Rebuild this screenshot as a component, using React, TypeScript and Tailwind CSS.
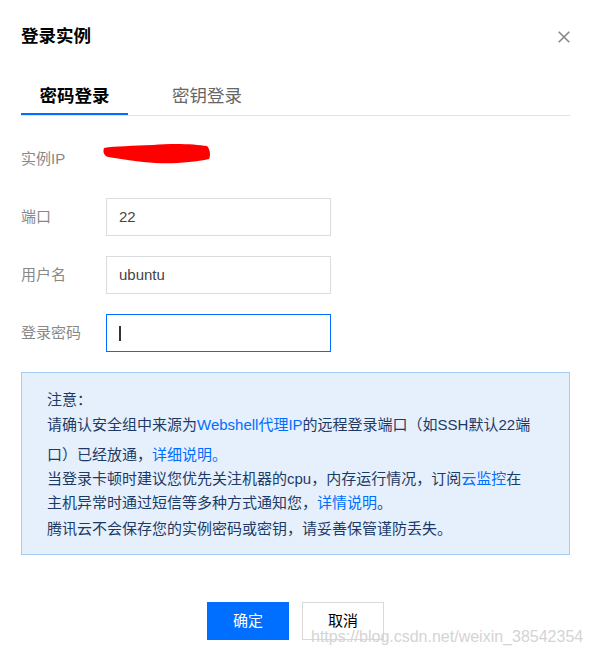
const font = "font-['Liberation_Sans','Noto_Sans_CJK_SC',sans-serif]";

// one form row: grey label on the left, field on the right
function FieldRow({ label, children }: { label: string; children: React.ReactNode }) {
  return (
    <div className="flex items-center mt-[20px]">
      <div className="w-[85px] text-[15px] leading-[24px] text-[#888]">{label}</div>
      {children}
    </div>
  );
}

function Link({ children }: { children: React.ReactNode }) {
  return <span className="text-[#006eff]">{children}</span>;
}

export default function App() {
  return (
    <div className={`relative w-[591px] h-[656px] bg-white px-[20px] pt-[24px] ${font}`}>
      {/* Header */}
      <div className="flex items-center justify-between h-[24px] pl-px">
        <h1 className="text-[17.5px] leading-[24px] font-bold text-black">登录实例</h1>
        <svg width="12" height="12" viewBox="0 0 12 12" className="mr-px mt-px">
          <path d="M0.7 0.7 L11.3 11.3 M11.3 0.7 L0.7 11.3" stroke="#888" strokeWidth="1.6" />
        </svg>
      </div>

      {/* Tabs */}
      <div className="flex mt-[36px] ml-px">
        <div className="w-[107px] h-[31px] text-center text-[17.5px] leading-[24px] font-bold text-black border-b-2 border-[#006eff]">
          密码登录
        </div>
        <div className="ml-[44px] h-[31px] text-[17.5px] leading-[24px] text-[#666]">密钥登录</div>
      </div>
      <div className="h-px bg-[#e2e2e2] ml-px mr-px" />

      {/* Instance IP (redacted) */}
      <div className="flex items-center h-[24px] mt-[31px] pl-px">
        <div className="w-[82px] text-[15px] leading-[24px] text-[#888]">实例IP</div>
        <svg width="108" height="21" viewBox="0 0 108 21" className="self-start mt-[-4px]">
          <path
            d="M1 5 C12 3 30 3 50 2 C70 0 92 1 104 3 C107 6 108 12 106 16 C92 19 72 21 52 20 C36 19 20 16 5 14 C0 12 0 8 1 5 Z"
            fill="#ff0000"
          />
        </svg>
      </div>

      {/* Inputs */}
      <div className="flex flex-col pl-px mt-[7px]">
        <FieldRow label="端口">
          <div className="w-[225px] h-[38px] border border-[#dcdcdc] px-[12px] flex items-center text-[15px] text-[#444]">
            22
          </div>
        </FieldRow>
        <FieldRow label="用户名">
          <div className="w-[225px] h-[38px] border border-[#dcdcdc] px-[12px] flex items-center text-[15px] text-[#444]">
            ubuntu
          </div>
        </FieldRow>
        <FieldRow label="登录密码">
          <div className="w-[225px] h-[38px] border border-[#006eff] px-[12px] flex items-center">
            <div className="w-[2px] h-[15px] bg-[#333]" />
          </div>
        </FieldRow>
      </div>

      {/* Notice */}
      <div className="mt-[20px] ml-px mr-px border border-[#a6cbf5] bg-[#e5f0fc] pl-[25px] pt-[15px] pb-[13px] text-[15px] leading-[24px] text-[#1d3a66] whitespace-nowrap">
        <div>注意：</div>
        <div className="mt-[1px]">
          请确认安全组中来源为<Link>Webshell代理IP</Link>的远程登录端口（如SSH默认22端
        </div>
        <div className="mt-[6px]">
          口）已经放通，<Link>详细说明。</Link>
        </div>
        <div>
          当登录卡顿时建议您优先关注机器的cpu，内存运行情况，订阅<Link>云监控</Link>在
        </div>
        <div>
          主机异常时通过短信等多种方式通知您，<Link>详情说明</Link>。
        </div>
        <div className="mt-[2px]">腾讯云不会保存您的实例密码或密钥，请妥善保管谨防丢失。</div>
      </div>

      {/* Footer buttons */}
      <div className="flex justify-center gap-[13px] mt-[47px]">
        <button className="w-[82px] h-[38px] bg-[#006eff] text-white text-[15px]">确定</button>
        <button className="w-[82px] h-[38px] border border-[#d9d9d9] bg-white text-black text-[15px]">取消</button>
      </div>

      {/* CSDN watermark */}
      <div className="absolute left-[311px] top-[627px] text-[16px] leading-[20px] text-[#d4d4d4]">
        https://blog.csdn.net/weixin_38542354
      </div>
    </div>
  );
}
